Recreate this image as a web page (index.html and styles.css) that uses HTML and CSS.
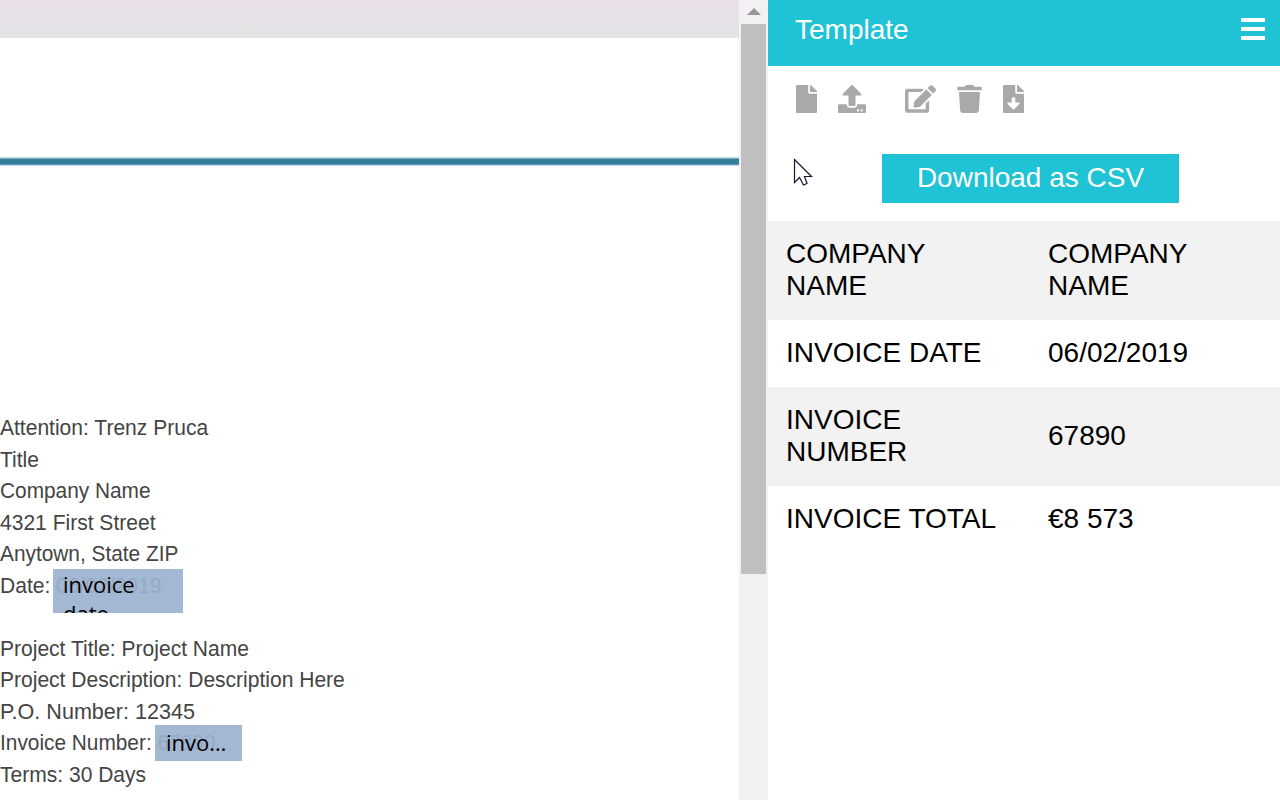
FILE: index.html
```html
<!DOCTYPE html>
<html lang="en">
<head>
<meta charset="utf-8">
<title>Template</title>
<link rel="stylesheet" href="styles.css">
</head>
<body>
<div class="app">
  <main class="viewer">
    <div class="page">
      <div class="page-top"></div>
      <div class="rule"></div>
      <div class="doc">
        <p><span>Attention: Trenz Pruca</span></p>
        <p><span>Title</span></p>
        <p><span class="narrow">Company Name</span></p>
        <p><span>4321 First Street</span></p>
        <p><span class="narrow">Anytown, State ZIP</span></p>
        <p><span>Date: 06/02/2019</span><b class="field field-date">invoice date</b></p>
        <p></p>
        <p><span>Project Title: Project Name</span></p>
        <p><span>Project Description: Description Here</span></p>
        <p><span class="wide">P.O. Number: 12345</span></p>
        <p><span class="narrow">Invoice Number: 67890</span><b class="field field-number">invoice number</b></p>
        <p><span>Terms: 30 Days</span></p>
      </div>
    </div>
    <div class="scrollbar">
      <svg class="up" width="14" height="7" viewBox="0 0 14 7"><path d="M0 7L7 0L14 7Z"/></svg>
      <div class="thumb"></div>
    </div>
  </main>
  <aside class="panel">
    <header class="header"><h1>Template</h1><div class="menu"><i></i><i></i><i></i></div></header>
    <div class="tools">
      <svg width="21" height="28" viewBox="0 0 384 512"><path d="M224 136V0H24C10.700 0 0 10.700 0 24v464c0 13.300 10.700 24 24 24h336c13.300 0 24-10.700 24-24V160H248c-13.200 0-24-10.800-24-24zm160-14.100v6.100H256V0h6.100c6.400 0 12.500 2.500 17 7l97.900 98c4.500 4.500 7 10.600 7 16.900z"/></svg>
      <svg class="upload" width="28" height="28" viewBox="0 0 512 512"><path d="M296 384h-80c-13.300 0-24-10.700-24-24V192h-87.700c-17.800 0-26.700-21.500-14.100-34.100L242.300 5.700c7.500-7.500 19.800-7.500 27.300 0l152.200 152.200c12.600 12.600 3.700 34.100-14.100 34.100H320v168c0 13.300-10.700 24-24 24zm216-8v112c0 13.300-10.700 24-24 24H24c-13.300 0-24-10.700-24-24V376c0-13.300 10.700-24 24-24h136v8c0 30.900 25.100 56 56 56h80c30.900 0 56-25.100 56-56v-8h136c13.300 0 24 10.700 24 24zm-124 88c0-11-9-20-20-20s-20 9-20 20 9 20 20 20 20-9 20-20zm64 0c0-11-9-20-20-20s-20 9-20 20 9 20 20 20 20-9 20-20z"/></svg>
      <svg class="edit" width="31" height="28" viewBox="0 0 576 512"><path d="M402.600 83.200l90.200 90.200c3.800 3.800 3.800 10 0 13.800L274.400 405.600l-92.800 10.300c-12.400 1.400-22.900-9.100-21.500-21.500l10.300-92.800L388.800 83.200c3.800-3.800 10-3.800 13.800 0zm162-22.900l-48.800-48.800c-15.200-15.200-39.900-15.200-55.200 0l-35.400 35.400c-3.800 3.800-3.800 10 0 13.800l90.200 90.200c3.800 3.800 10 3.800 13.800 0l35.400-35.400c15.200-15.300 15.200-40 0-55.200zM384 346.200V448H64V128h229.800c3.200 0 6.200-1.300 8.500-3.500l40-40c7.600-7.600 2.200-20.500-8.500-20.500H48C21.500 64 0 85.500 0 112v352c0 26.500 21.500 48 48 48h352c26.500 0 48-21.500 48-48V306.200c0-10.700-12.900-16-20.500-8.500l-40 40c-2.200 2.300-3.500 5.300-3.500 8.500z"/></svg>
      <svg class="trash" width="25" height="28" viewBox="0 0 448 512"><path d="M432 32H312l-9.400-18.700A24 24 0 0 0 281.100 0H166.800a23.700 23.700 0 0 0-21.400 13.300L136 32H16A16 16 0 0 0 0 48v32a16 16 0 0 0 16 16h416a16 16 0 0 0 16-16V48a16 16 0 0 0-16-16zM32 128L53.200 467a48 48 0 0 0 47.900 45h245.800a48 48 0 0 0 47.900-45L416 128z"/></svg>
      <svg class="save" width="21" height="28" viewBox="0 0 384 512"><path d="M224 136V0H24C10.700 0 0 10.700 0 24v464c0 13.300 10.700 24 24 24h336c13.300 0 24-10.700 24-24V160H248c-13.200 0-24-10.800-24-24zm76.500 211.400l-96.400 95.700c-6.700 6.600-17.400 6.600-24 0l-96.400-95.700C73.500 337.300 80.600 320 94.800 320H160v-80c0-8.800 7.200-16 16-16h32c8.800 0 16 7.200 16 16v80h65.200c14.200 0 21.300 17.300 11.300 27.400zM377 105L279.100 7c-4.500-4.500-10.600-7-17-7H256v128h128v-6.100c0-6.300-2.500-12.400-7-16.900z"/></svg>
    </div>
    <button class="download">Download as CSV</button>
    <div class="table">
      <div class="row tall"><span>COMPANY<br>NAME</span><span>COMPANY<br>NAME</span></div>
      <div class="row"><span>INVOICE DATE</span><span>06/02/2019</span></div>
      <div class="row tall"><span>INVOICE<br>NUMBER</span><span>67890</span></div>
      <div class="row"><span>INVOICE TOTAL</span><span>€8 573</span></div>
    </div>
  </aside>
  <svg class="cursor" width="20" height="28" viewBox="0 0 20 28"><path d="M1.500 1.500V24.500L6.500 19.500L10.500 27L14 25.500L11.500 18.500H18.500Z"/></svg>
</div>
</body>
</html>
```
FILE: styles.css
```css
* { box-sizing: border-box; }
body { margin: 0; background: #fff; font-family: "Liberation Sans", Arial, sans-serif; }
.app { position: relative; display: flex; width: 1280px; height: 800px; overflow: hidden; }
.viewer { display: flex; width: 768px; }
.page { width: 739px; height: 800px; overflow: hidden; }
.page-top { height: 38px; background: linear-gradient(#e9e0ea 0, #e7e1e8 60%, #e1e6e3 100%); }
.rule { height: 9px; margin-top: 119px; background: linear-gradient(#c6dde0 0 1px, #80afbf 1px 2px, #317f99 2px 7px, #6899bd 7px 8px, #c4d4ed 8px); }
.doc { padding-top: 246px; color: #444; font-size: 22px; line-height: 31.55px; }
.doc p { position: relative; height: 31.55px; margin: 0; white-space: nowrap; }
.doc span { display: inline-block; transform-origin: 0 50%; transform: scaleX(.956); }
.doc .narrow { transform: scaleX(.947); }
.doc .wide { transform: scaleX(.98); }
.field { position: absolute; overflow: hidden; background: rgba(155, 178, 206, .92); color: #000; font: 22px/30px "Open Sans", sans-serif; }
.field-date { left: 53px; top: -1px; width: 130px; height: 44px; padding: 1px 40px 0 10px; line-height: 29px; white-space: normal; }
.field-number { left: 155px; top: -2px; width: 87px; height: 36px; padding: 2px 11px; text-overflow: ellipsis; }
.scrollbar { width: 29px; height: 800px; padding: 8px 3px 0 2px; background: #f1f1f1; }
.up { display: block; margin-left: 6px; fill: #969696; }
.thumb { width: 25px; height: 550px; margin-top: 9px; background: #c0bfc0; }
.panel { width: 512px; }
.header { display: flex; justify-content: space-between; height: 66px; padding: 13px 15px 0 27px; background: #1fc3d5; color: #fff; }
.header h1 { margin: 1px 0 0; font-size: 28px; font-weight: 400; line-height: 32px; }
.menu { display: grid; gap: 5px; align-content: start; width: 24px; padding-top: 5px; }
.menu i { height: 4px; background: #fff; }
.tools { display: flex; height: 47px; padding: 19px 0 0 28px; fill: #a9a9a9; }
.tools svg { flex: none; }
.upload { margin-left: 21px; }
.edit { margin-left: 39px; }
.trash { margin-left: 21px; }
.save { margin-left: 21px; }
.download { display: block; width: 297px; height: 49px; margin: 41px 0 18px 114px; padding: 0 0 2px; border: 0; background: #1fc3d5; color: #fff; font: 28px/47px "Liberation Sans", Arial, sans-serif; }
.row { display: grid; grid-template-columns: 262px 1fr; align-items: center; height: 67px; padding: 0 0 2px 18px; color: #000; font-size: 28px; line-height: 32px; }
.row.tall { height: 99px; background: #f2f2f2; }
.cursor { position: absolute; left: 793px; top: 158px; fill: #fff; stroke: #17172b; stroke-width: 1.2; }
```
